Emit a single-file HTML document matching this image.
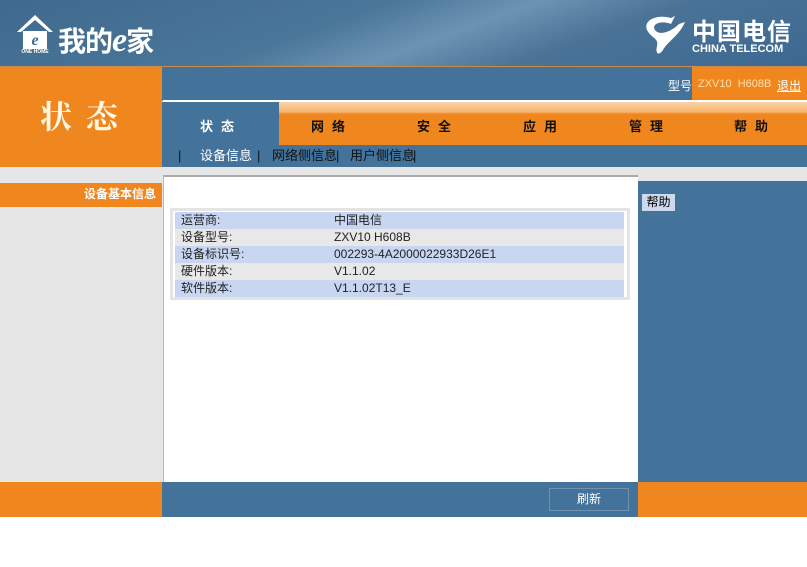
<!DOCTYPE html>
<html><head><meta charset="utf-8"><style>
*{margin:0;padding:0;box-sizing:border-box}
body{width:807px;height:567px;position:relative;overflow:hidden;background:#fff;font-family:"Liberation Sans","Noto Sans CJK SC",sans-serif;font-size:12px}
div{position:absolute}
.hdr{left:0;top:0;width:807px;height:67px;background:linear-gradient(160deg,#3f6a8e 0%,#4a7699 40%,#6d93b3 55%,#4a7396 70%,#3d6890 100%);border-bottom:1px solid #c98a4a}
.or{background:#f0861e}
.bl{background:#43729a}
.tab{top:102px;height:43px;color:#111;font-weight:bold;font-size:13px;text-align:center;line-height:50px;letter-spacing:8px}
.sn{top:148px;font-size:13px;color:#111;line-height:16px}
</style></head><body>
<div class="hdr">
 <svg style="position:absolute;left:15px;top:12px" width="40" height="42" viewBox="0 0 40 42"><path d="M2 20 L20 3 L38 20 L34 20 L20 8 L6 20Z" fill="#fff"/><rect x="8" y="19" width="24" height="18" fill="#fff"/><text x="20" y="33" font-size="16" font-style="italic" font-weight="bold" fill="#3f6a8e" text-anchor="middle" font-family="Liberation Serif">e</text><text x="20" y="41" font-size="5" fill="#fff" text-anchor="middle" font-weight="bold">ONE HOME</text></svg>
 <div style="left:58px;top:20px;color:#fff;font-size:28px;font-weight:bold;letter-spacing:-1px">我的<i style="font-family:'Liberation Serif';font-size:34px">e</i>家</div>
 <svg style="position:absolute;left:641px;top:12px" width="48" height="44" viewBox="0 0 48 44"><path d="M6 18 C2 8 16 2 30 6 L34 4 L30 12 C20 8 10 12 14 18 C18 24 30 20 38 12 L44 10 C38 24 26 30 22 38 C18 44 14 42 16 34 C18 26 10 26 6 18Z" fill="#fff"/></svg>
 <div style="left:692px;top:12px;color:#fff;font-size:24px;font-weight:bold;letter-spacing:1px">中国电信</div>
 <div style="left:692px;top:43px;color:#fff;font-size:11px;font-weight:bold">CHINA TELECOM</div>
</div>
<div class="or" style="left:0;top:67px;width:162px;height:100px;color:#fff7e6;font-size:32px;font-weight:bold;font-family:'Noto Serif CJK SC',serif;text-align:center;line-height:96px;letter-spacing:14px;padding-left:10px">状态</div>
<div class="bl" style="left:162px;top:67px;width:645px;height:34px"></div>
<div style="left:668px;top:77px;color:#fff;font-size:12px">型号</div>
<div class="or" style="left:692px;top:67px;width:115px;height:33px"></div>
<div style="left:698px;top:78px;color:#fde0b0;font-size:11px">ZXV10&nbsp; H608B</div>
<div style="left:777px;top:77px;color:#fff;text-decoration:underline">退出</div>
<div style="left:163px;top:100px;width:644px;height:2px;background:#fff"></div>
<div class="bl" style="left:162px;top:102px;width:645px;height:65px"></div>
<div style="left:279px;top:102px;width:528px;height:43px;background:linear-gradient(#fbd3a8 0,#f7b46e 10px,#f0861e 12px,#f0861e 100%)"></div>
<div class="tab" style="left:163px;width:116px;color:#fff">状态</div>
<div class="tab" style="left:279px;width:106px">网络</div>
<div class="tab" style="left:385px;width:106px">安全</div>
<div class="tab" style="left:491px;width:106px">应用</div>
<div class="tab" style="left:597px;width:106px">管理</div>
<div class="tab" style="left:703px;width:104px">帮助</div>
<div class="sn" style="left:178px">|</div>
<div class="sn" style="left:200px;color:#fff">设备信息</div>
<div class="sn" style="left:257px">|</div>
<div class="sn" style="left:272px">网络侧信息</div>
<div class="sn" style="left:336px">|</div>
<div class="sn" style="left:350px">用户侧信息</div>
<div class="sn" style="left:413px">|</div>
<div style="left:0;top:167px;width:807px;height:315px;background:#e6e6e6"></div>
<div class="or" style="left:0;top:183px;width:162px;height:24px;color:#fff;font-weight:bold;text-align:right;padding-right:6px;line-height:22px">设备基本信息</div>
<div style="left:163px;top:175px;width:475px;height:307px;background:#fff;border-top:2px solid #aaa;border-left:1px solid #bbb"></div>
<div class="bl" style="left:638px;top:181px;width:169px;height:301px"></div>
<div style="left:642px;top:194px;width:33px;height:17px;background:#cdd9ee;color:#000;line-height:17px;text-align:center">帮助</div>
<div style="left:170px;top:208px;width:460px;height:92px;background:#fff;border:3px solid #e4e4e4"></div>
<div style="left:175px;top:212px;width:449px;height:85px">
 <div style="left:0;top:0;width:449px;height:17px;background:#c8d6f2"></div>
 <div style="left:0;top:17px;width:449px;height:17px;background:#e8e8e8"></div>
 <div style="left:0;top:34px;width:449px;height:17px;background:#c8d6f2"></div>
 <div style="left:0;top:51px;width:449px;height:17px;background:#e8e8e8"></div>
 <div style="left:0;top:68px;width:449px;height:17px;background:#c8d6f2"></div>
 <div style="left:6px;top:0;line-height:17px;color:#222">运营商:<br>设备型号:<br>设备标识号:<br>硬件版本:<br>软件版本:</div>
 <div style="left:159px;top:0;line-height:17px;color:#222">中国电信<br>ZXV10 H608B<br>002293-4A2000022933D26E1<br>V1.1.02<br>V1.1.02T13_E</div>
</div>
<div class="or" style="left:0;top:482px;width:162px;height:35px"></div>
<div class="bl" style="left:162px;top:482px;width:476px;height:35px"></div>
<div class="or" style="left:638px;top:482px;width:169px;height:35px"></div>
<div style="left:549px;top:488px;width:80px;height:23px;border:1px solid #6f92b0;color:#fff;text-align:center;line-height:21px">刷新</div>
</body></html>
